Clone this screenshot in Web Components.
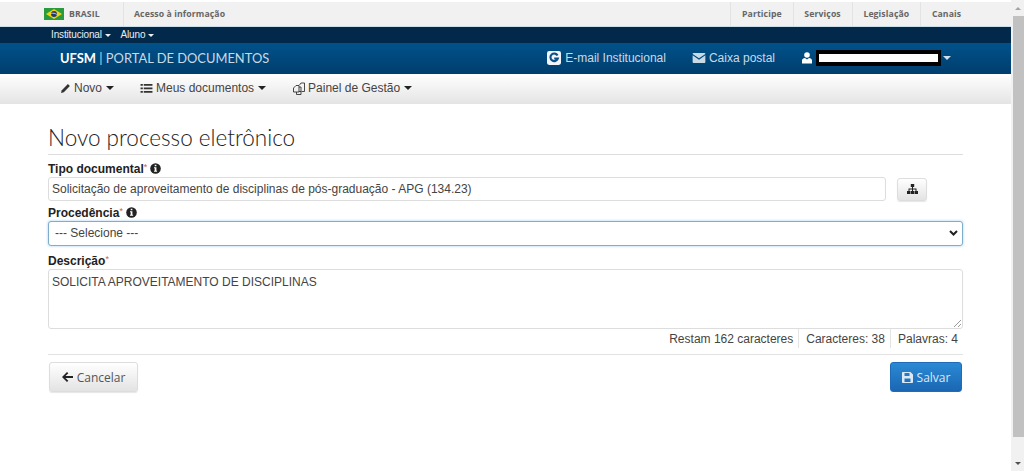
<!DOCTYPE html>
<html lang="pt-BR">
<head>
<meta charset="utf-8">
<title>Novo processo eletrônico</title>
<style>
  html, body { margin: 0; height: 100%; overflow: hidden; background: #fff; }
  body { font-family: "Liberation Sans", Arial, sans-serif; color: #333; }
  .page { display: flex; height: 471px; }
  .main { flex: 1; min-width: 0; }
</style>
</head>
<body>
<div class="page">
  <div class="main">
    <gov-bar></gov-bar>
    <portal-header></portal-header>
    <portal-nav></portal-nav>
    <process-form></process-form>
  </div>
  <fake-scrollbar></fake-scrollbar>
</div>

<script>
const icons = {
  pencil: '<svg width="11" height="11" viewBox="0 0 12 12"><path fill="currentColor" d="M8.600 1.200 10.800 3.400 4.200 10 1 11l1-3.200z"/></svg>',
  list: '<svg width="13" height="11" viewBox="0 0 13 12"><path fill="currentColor" d="M0 1h2.500v2H0zM3.500 1H13v2H3.500zM0 4.800h2.500v2H0zM3.500 4.800H13v2H3.500zM0 8.600h2.500v2H0zM3.500 8.600H13v2H3.500z"/></svg>',
  copy: '<svg width="12" height="13" viewBox="0 0 12 13"><path fill="none" stroke="currentColor" stroke-width=".9" d="M.5 6 3 3.500h3v6.500H.5zM6 5h2V9.500h-2M6.500 3 8 1h3.500v8.500H8.500M3.500 10v2.500H8V9.500"/></svg>',
  google: '<svg width="14" height="14" viewBox="0 0 13 13"><rect width="13" height="13" rx="2" fill="#f2f6fa"/><path fill="none" stroke="#0d5288" stroke-width="2" d="M9.800 4.200A3.500 3.500 0 1 0 10 7H6.700"/></svg>',
  mail: '<svg width="14" height="10" viewBox="0 0 14 11"><path fill="currentColor" d="M1.200 0h11.600c.7 0 1.200.4 1.200 1L7 5.700 0 1c0-.6.5-1 1.200-1zM0 2.600l7 4.700 7-4.700v7.200c0 .7-.5 1.200-1.200 1.200H1.200C.5 11 0 10.500 0 9.800z"/></svg>',
  user: '<svg width="10" height="12" viewBox="0 0 10 12"><circle cx="5" cy="3" r="2.800" fill="currentColor"/><path fill="currentColor" d="M0 11.500V8.500C0 7 1.500 6 3 6l2 1.500L7 6c1.500 0 3 1 3 2.500v3z"/></svg>',
  info: '<svg width="11" height="11" viewBox="0 0 11 11"><circle cx="5.500" cy="5.500" r="5.300" fill="#222"/><path fill="#fff" d="M4.700 1.800h1.700v1.500H4.700zM4 4.300h2.400v3.400h.7v1H4v-1h.7V5.300H4z"/></svg>',
  tree: '<svg width="11" height="10" viewBox="0 0 11 10"><path fill="#222" d="M3.800 0h3.400v3H6v1.500h3.500V7H11v3H7.500V7h1V5.500h-2.500V7h1v3H4V7h1V5.500H2.500V7h1v3H0V7h1.500V4.500H5V3H3.800z"/></svg>',
  back: '<svg width="11" height="10" viewBox="0 0 11 10"><path fill="#222" d="M5 0 6.300 1.300 3.500 3.900H11v2.200H3.500l2.800 2.600L5 10 0 5z"/></svg>',
  save: '<svg width="11" height="11" viewBox="0 0 11 11"><path fill="currentColor" fill-rule="evenodd" d="M0 1c0-.6.4-1 1-1h7.500L11 2.500V10c0 .6-.4 1-1 1H1c-.6 0-1-.4-1-1zM2.500 1v3h5V1zM2.500 6.500V10h6V6.500z"/></svg>'
};

class GovBar extends HTMLElement {
  constructor() {
    super();
    this.attachShadow({ mode: 'open' });
  }
  connectedCallback() {
    this.shadowRoot.innerHTML = `
      <style>
        :host { display: block; box-sizing: border-box; margin-top: 2px; height: 25px; background: #f1f1f1; border-bottom: 1px solid #c9dfeb; font: 700 8.700px "Open Sans", sans-serif; color: #666; letter-spacing: .1px; }
        .bar { display: flex; align-items: stretch; height: 100%; padding: 0 39px 0 44px; }
        .brasil { display: flex; align-items: center; gap: 5px; width: 79px; border-right: 1px solid #e3e3e3; }
        .acesso { display: flex; align-items: center; padding-left: 10px; flex: 1; }
        .links { display: flex; }
        .links span { display: flex; align-items: center; border-left: 1px solid #e3e3e3; padding: 0 10.800px; }
      </style>
      <div class="bar">
        <div class="brasil">
          <svg width="20" height="12" viewBox="0 0 20 12"><rect width="20" height="12" fill="#2a9a3f"/><path fill="#f1d40e" d="M10 1 18 6 10 11 2 6z"/><circle cx="10" cy="6" r="3" fill="#1f3a70"/><path stroke="#fff" stroke-width=".7" fill="none" d="M7.200 5.400c2-.4 4-.1 5.600 1"/></svg>
          BRASIL
        </div>
        <div class="acesso">Acesso à informação</div>
        <div class="links"><span>Participe</span><span>Serviços</span><span>Legislação</span><span>Canais</span></div>
      </div>`;
  }
}
customElements.define('gov-bar', GovBar);

class PortalHeader extends HTMLElement {
  constructor() {
    super();
    this.attachShadow({ mode: 'open' });
  }
  connectedCallback() {
    this.shadowRoot.innerHTML = `
      <style>
        :host { display: block; color: #fff; }
        .caret { display: inline-block; border-top: 3.500px solid currentColor; border-left: 3.500px solid transparent; border-right: 3.500px solid transparent; vertical-align: middle; }
        .top { height: 16px; background: #02294a; font: 10px/15px "Liberation Sans", sans-serif; padding-left: 51px; display: flex; gap: 10px; letter-spacing: -.15px; color: #e8eef3; }
        .brand-row { height: 31px; padding-bottom: 2px; box-sizing: border-box; background: linear-gradient(#00528a, #003e6e); display: flex; align-items: center; padding-left: 60px; color: #c9d9e5; }
        .brand { font: 12.900px "Lato", sans-serif; flex: 1; white-space: nowrap; }
        .brand b { color: #fff; }
        .item { display: flex; align-items: center; gap: 4px; font: 12px "Liberation Sans", sans-serif; }
        .mail { margin-left: 26px; gap: 3px; }
        .user { margin-left: 27px; gap: 0; color: #fff; margin-right: 60px; }
        .redact { box-sizing: border-box; width: 125px; height: 16px; border: solid #000; border-width: 4px 3px; background: #fff; margin-left: 4px; }
        .user .caret { margin-left: 2px; border-width: 4px 4px 0; color: #cfe0ec; }
      </style>
      <div class="top"><span>Institucional <i class="caret"></i></span><span>Aluno <i class="caret"></i></span></div>
      <div class="brand-row">
        <div class="brand"><b>UFSM</b> | PORTAL DE DOCUMENTOS</div>
        <div class="item">${icons.google}<span>E-mail Institucional</span></div>
        <div class="item mail">${icons.mail}<span>Caixa postal</span></div>
        <div class="item user">${icons.user}<div class="redact"></div><i class="caret"></i></div>
      </div>`;
  }
}
customElements.define('portal-header', PortalHeader);

class PortalNav extends HTMLElement {
  constructor() {
    super();
    this.attachShadow({ mode: 'open' });
  }
  connectedCallback() {
    this.shadowRoot.innerHTML = `
      <style>
        :host { display: block; height: 30px; background: linear-gradient(#fff, #e4e4e4); font: 12px "Liberation Sans", sans-serif; color: #444; }
        nav { display: flex; align-items: center; height: 100%; padding: 0 0 2px 60px; box-sizing: border-box; gap: 27px; }
        span { display: flex; align-items: center; gap: 3px; white-space: nowrap; }
        span:first-child { margin-right: -1px; }
        svg { color: #333; }
        .caret { display: inline-block; border-top: 4px solid #222; border-left: 4px solid transparent; border-right: 4px solid transparent; margin-left: 1px; }
      </style>
      <nav>
        <span>${icons.pencil}Novo<i class="caret"></i></span>
        <span>${icons.list}Meus documentos<i class="caret"></i></span>
        <span>${icons.copy}Painel de Gestão<i class="caret"></i></span>
      </nav>`;
  }
}
customElements.define('portal-nav', PortalNav);

class FieldLabel extends HTMLElement {
  constructor() {
    super();
    this.attachShadow({ mode: 'open' });
  }
  connectedCallback() {
    const info = this.hasAttribute('info') ? icons.info : '';
    this.shadowRoot.innerHTML = `
      <style>
        :host { display: flex; align-items: center; gap: 3px; height: 15px; font: 700 12px "Liberation Sans", sans-serif; color: #222; }
        sup { color: #d9534f; font-weight: 400; font-size: 9px; line-height: 0; margin: -3px 0 0 -3px; }
        svg { display: block; }
      </style>
      <slot></slot><sup>*</sup>${info}`;
  }
}
customElements.define('field-label', FieldLabel);

class UiButton extends HTMLElement {
  constructor() {
    super();
    this.attachShadow({ mode: 'open' });
  }
  connectedCallback() {
    const primary = this.getAttribute('kind') === 'primary';
    this.shadowRoot.innerHTML = `
      <style>
        :host { display: inline-flex; align-items: center; justify-content: center; gap: 4px; box-sizing: border-box; height: 30px; border-radius: 3px; font: 12px "Open Sans", sans-serif;
          ${primary
            ? 'background: linear-gradient(#2a8ad4, #1b66b3); color: #dce9f4; border: 1px solid #1f6db8;'
            : 'background: linear-gradient(#fff, #e3e3e3); color: #555; border: 1px solid #ddd; box-shadow: 0 1px 1px rgba(0,0,0,.1);'}
        }
      </style>
      <slot></slot>`;
  }
}
customElements.define('ui-button', UiButton);

class ProcessForm extends HTMLElement {
  constructor() {
    super();
    this.attachShadow({ mode: 'open' });
  }
  connectedCallback() {
    this.shadowRoot.innerHTML = `
      <style>
        :host { display: block; padding: 20px 48px 0 48px; font: 12px "Liberation Sans", sans-serif; color: #333; }
        h1 { margin: 0; height: 30px; font: 300 22.500px/27px "Lato", sans-serif; color: #222; border-bottom: 1px solid #ddd; white-space: nowrap; }
        .control { box-sizing: border-box; display: flex; align-items: center; border: 1px solid #ddd; border-radius: 3px; background: #fff; padding: 0 3px; font-size: 12px; color: #444; }
        .tipo-label { margin-top: 6px; }
        .tipo { display: flex; align-items: center; margin-top: 1px; }
        .tipo .control { flex: none; width: 838px; height: 24px; }
        .tipo ui-button { margin-left: 11px; width: 30px; height: 23px; }
        .proc-label { margin-top: 4px; }
        .select { margin-top: 1px; height: 25px; border-color: #7eaecb; box-shadow: 0 0 3px rgba(102,175,233,.6); justify-content: space-between; padding: 0 4px 1px 6px; }
        .desc-label { margin-top: 7px; }
        .textarea { position: relative; margin-top: 1px; height: 60px; align-items: flex-start; padding: 5px 3px; }
        .grip { position: absolute; right: 1px; bottom: 1px; }
        .counters { display: flex; justify-content: flex-end; height: 25px; align-items: flex-start; color: #444; }
        .counters span { height: 19px; padding: 1px 5px 0 7px; box-sizing: border-box; border-left: 1px solid #e4e4e4; white-space: nowrap; line-height: 18px; }
        .counters span:first-child { border: 0; }
        hr { margin: 0; border: 0; border-top: 1px solid #e2e2e2; }
        .actions { display: flex; justify-content: space-between; padding: 7px 1px 0; }
        .cancel { width: 89px; }
        .save { width: 72px; }
      </style>
      <h1>Novo processo eletrônico</h1>
      <field-label class="tipo-label" info>Tipo documental</field-label>
      <div class="tipo">
        <div class="control">Solicitação de aproveitamento de disciplinas de pós-graduação - APG (134.23)</div>
        <ui-button>${icons.tree}</ui-button>
      </div>
      <field-label class="proc-label" info>Procedência</field-label>
      <div class="control select">
        <span>--- Selecione ---</span>
        <svg width="9" height="6" viewBox="0 0 9 6"><path fill="none" stroke="#222" stroke-width="2" d="M1 1l3.500 3.500L8 1"/></svg>
      </div>
      <field-label class="desc-label">Descrição</field-label>
      <div class="control textarea">
        SOLICITA APROVEITAMENTO DE DISCIPLINAS
        <svg class="grip" width="8" height="8" viewBox="0 0 8 8"><path stroke="#999" d="M1 8 8 1M5 8 8 5"/></svg>
      </div>
      <div class="counters"><span>Restam 162 caracteres</span><span>Caracteres: 38</span><span>Palavras: 4</span></div>
      <hr>
      <div class="actions">
        <ui-button class="cancel">${icons.back}Cancelar</ui-button>
        <ui-button class="save" kind="primary">${icons.save}Salvar</ui-button>
      </div>`;
  }
}
customElements.define('process-form', ProcessForm);

class FakeScrollbar extends HTMLElement {
  constructor() {
    super();
    this.attachShadow({ mode: 'open' });
  }
  connectedCallback() {
    this.shadowRoot.innerHTML = `
      <style>
        :host { display: flex; flex-direction: column; flex: none; width: 13px; height: 471px; background: #f1f1f1; }
        .arrow { height: 16px; display: flex; align-items: center; justify-content: center; flex: none; }
        .thumb { height: 421px; margin-left: 2px; background: #c1c1c1; flex: none; }
        .gap { flex: 1; }
        i { border-left: 3px solid transparent; border-right: 3px solid transparent; }
        .up { border-bottom: 3px solid #a3a3a3; }
        .down { border-top: 3px solid #505050; }
      </style>
      <div class="arrow"><i class="up"></i></div>
      <div class="thumb"></div>
      <div class="gap"></div>
      <div class="arrow"><i class="down"></i></div>`;
  }
}
customElements.define('fake-scrollbar', FakeScrollbar);
</script>
</body>
</html>
